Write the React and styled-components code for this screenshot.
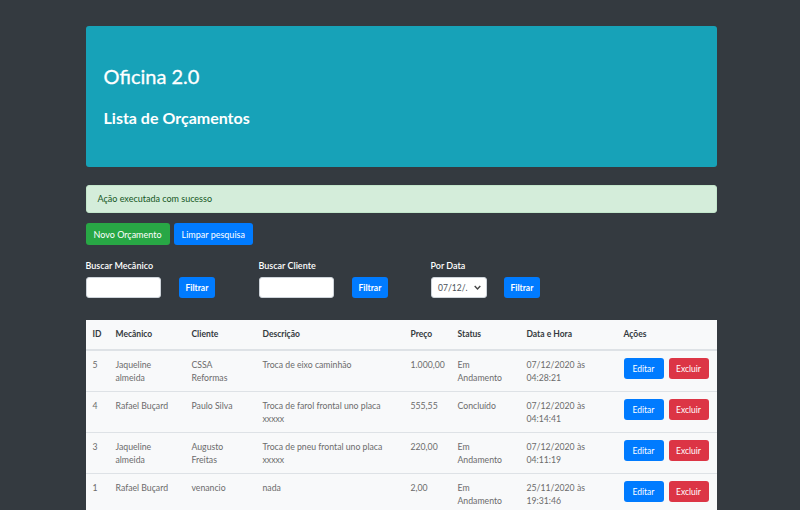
import React from "react";
import styled, { createGlobalStyle } from "styled-components";

const GlobalStyle = createGlobalStyle`
  html, body {
    margin: 0;
    padding: 0;
    background: #343a40;
  }
  body {
    font-family: Lato, "Noto Sans", sans-serif;
  }
`;

const orcamentos = [
  {
    id: 5,
    mecanico: "Jaqueline almeida",
    cliente: "CSSA Reformas",
    descricao: "Troca de eixo caminhão",
    preco: "1.000,00",
    status: "Em Andamento",
    data: "07/12/2020 às 04:28:21",
  },
  {
    id: 4,
    mecanico: "Rafael Buçard",
    cliente: "Paulo Silva",
    descricao: "Troca de farol frontal uno placa xxxxx",
    preco: "555,55",
    status: "Concluído",
    data: "07/12/2020 às 04:14:41",
  },
  {
    id: 3,
    mecanico: "Jaqueline almeida",
    cliente: "Augusto Freitas",
    descricao: "Troca de pneu frontal uno placa xxxxx",
    preco: "220,00",
    status: "Em Andamento",
    data: "07/12/2020 às 04:11:19",
  },
  {
    id: 1,
    mecanico: "Rafael Buçard",
    cliente: "venancio",
    descricao: "nada",
    preco: "2,00",
    status: "Em Andamento",
    data: "25/11/2020 às 19:31:46",
  },
];

const colunas = [
  { titulo: "ID", largura: 23 },
  { titulo: "Mecânico", largura: 76 },
  { titulo: "Cliente", largura: 71 },
  { titulo: "Descrição", largura: 148 },
  { titulo: "Preço", largura: 47 },
  { titulo: "Status", largura: 69 },
  { titulo: "Data e Hora", largura: 97 },
  { titulo: "Ações", largura: 100 },
];

const App = () => {
  return (
    <>
      <GlobalStyle />
      <StyledContainer>
        <StyledJumbotron>
          <StyledTitle>Oficina 2.0</StyledTitle>
          <StyledSubtitle>Lista de Orçamentos</StyledSubtitle>
        </StyledJumbotron>

        <StyledAlert>Ação executada com sucesso</StyledAlert>

        <StyledActions>
          <StyledButton variant="success">Novo Orçamento</StyledButton>
          <StyledButton variant="primary">Limpar pesquisa</StyledButton>
        </StyledActions>

        <StyledFilters>
          <StyledFilterGroup>
            <StyledLabel>Buscar Mecânico</StyledLabel>
            <StyledFilterRow>
              <StyledInput type="text" />
              <StyledButton variant="primary" size="filter">
                Filtrar
              </StyledButton>
            </StyledFilterRow>
          </StyledFilterGroup>
          <StyledFilterGroup>
            <StyledLabel>Buscar Cliente</StyledLabel>
            <StyledFilterRow>
              <StyledInput type="text" />
              <StyledButton variant="primary" size="filter">
                Filtrar
              </StyledButton>
            </StyledFilterRow>
          </StyledFilterGroup>
          <StyledFilterGroup>
            <StyledLabel>Por Data</StyledLabel>
            <StyledFilterRow>
              <StyledDate>
                <span>07/12/.</span>
                <svg width="7" height="5" viewBox="0 0 10 6">
                  <path d="M1 1l4 4 4-4" fill="none" stroke="#444" strokeWidth="2" />
                </svg>
              </StyledDate>
              <StyledButton variant="primary" size="filter">
                Filtrar
              </StyledButton>
            </StyledFilterRow>
          </StyledFilterGroup>
        </StyledFilters>

        <StyledTable>
          <colgroup>
            {colunas.map((c) => (
              <col key={c.titulo} style={{ width: c.largura }} />
            ))}
          </colgroup>
          <thead>
            <tr>
              {colunas.map((c) => (
                <StyledTh key={c.titulo}>{c.titulo}</StyledTh>
              ))}
            </tr>
          </thead>
          <tbody>
            {orcamentos.map((o) => (
              <tr key={o.id}>
                <StyledTd>{o.id}</StyledTd>
                <StyledTd>{o.mecanico}</StyledTd>
                <StyledTd>{o.cliente}</StyledTd>
                <StyledTd>{o.descricao}</StyledTd>
                <StyledTd>{o.preco}</StyledTd>
                <StyledTd>{o.status}</StyledTd>
                <StyledTd>{o.data}</StyledTd>
                <StyledTd>
                  <StyledRowButtons>
                    <StyledButton variant="primary" size="row">
                      Editar
                    </StyledButton>
                    <StyledButton variant="danger" size="row">
                      Excluir
                    </StyledButton>
                  </StyledRowButtons>
                </StyledTd>
              </tr>
            ))}
          </tbody>
        </StyledTable>
      </StyledContainer>
    </>
  );
};

export default App;

const cores = {
  primary: "#007bff",
  success: "#28a745",
  danger: "#dc3545",
};

const tamanhos = {
  normal: "height: 22px; padding: 0 8px; font-size: 9px;",
  filter: "height: 21px; padding: 0 7px; font-weight: 700;",
  row: "height: 21px; width: 40px; padding: 0;",
};

const StyledContainer = styled.div`
  box-sizing: border-box;
  width: 633px;
  margin: 0 auto;
  padding: 26px 0 0 2px;
`;

const StyledJumbotron = styled.div`
  background-color: #17a2b8;
  border-radius: 3px;
  box-sizing: border-box;
  height: 141px;
  padding: 38px 18px 0;
  color: #fff;
`;

const StyledTitle = styled.h1`
  font-size: 20px;
  font-weight: 400;
  line-height: 24px;
  margin: 0;
  -webkit-text-stroke: 0.3px #fff;
`;

const StyledSubtitle = styled.h3`
  font-size: 16px;
  font-weight: 700;
  line-height: 18px;
  margin: 21px 0 0;
`;

const StyledAlert = styled.div`
  background-color: #d4edda;
  border: 1px solid #c3e6cb;
  border-radius: 3px;
  box-sizing: border-box;
  color: #155724;
  font-size: 9px;
  height: 28px;
  line-height: 26px;
  margin-top: 18px;
  padding: 0 11px;
`;

const StyledActions = styled.div`
  display: flex;
  gap: 4px;
  margin-top: 10px;
`;

const StyledButton = styled.button`
  background-color: ${(p) => cores[p.variant]};
  border: none;
  border-radius: 3px;
  color: #fff;
  cursor: pointer;
  font-family: Lato, "Noto Sans", sans-serif;
  font-size: 8.5px;
  ${(p) => tamanhos[p.size || "normal"]}
`;

const StyledFilters = styled.div`
  display: grid;
  grid-template-columns: 173px 172px auto;
  margin-top: 15px;
`;

const StyledFilterGroup = styled.div`
  display: flex;
  flex-direction: column;
  gap: 5px;
`;

const StyledLabel = styled.label`
  color: #fff;
  font-size: 9px;
  font-weight: 600;
  line-height: 12px;
`;

const StyledFilterRow = styled.div`
  display: flex;
  align-items: center;
  gap: 18px;
`;

const StyledInput = styled.input`
  background: #fff;
  border: 1px solid #ced4da;
  border-radius: 3px;
  box-sizing: border-box;
  height: 21px;
  width: 75px;
`;

const StyledDate = styled.div`
  align-items: center;
  background: #fff;
  border: 1px solid #ced4da;
  border-radius: 3px;
  box-sizing: border-box;
  color: #495057;
  display: flex;
  font-size: 8.5px;
  gap: 6px;
  height: 21px;
  justify-content: flex-end;
  margin-right: -1px;
  padding: 0 5px;
  width: 56px;
`;

const StyledTable = styled.table`
  background-color: #f8f9fa;
  border-collapse: collapse;
  margin-top: 22px;
  table-layout: fixed;
  width: 631px;
`;

const StyledTh = styled.th`
  border-bottom: 2px solid #dee2e6;
  color: #343a40;
  font-size: 8.5px;
  font-weight: 700;
  height: 29px;
  line-height: 13px;
  padding: 0 7px;
  text-align: left;
`;

const StyledTd = styled.td`
  border-top: 1px solid #dee2e6;
  color: #6b6b6b;
  font-size: 8.7px;
  line-height: 13px;
  padding: 7px;
  vertical-align: top;
`;

const StyledRowButtons = styled.div`
  display: flex;
  gap: 5px;
`;
